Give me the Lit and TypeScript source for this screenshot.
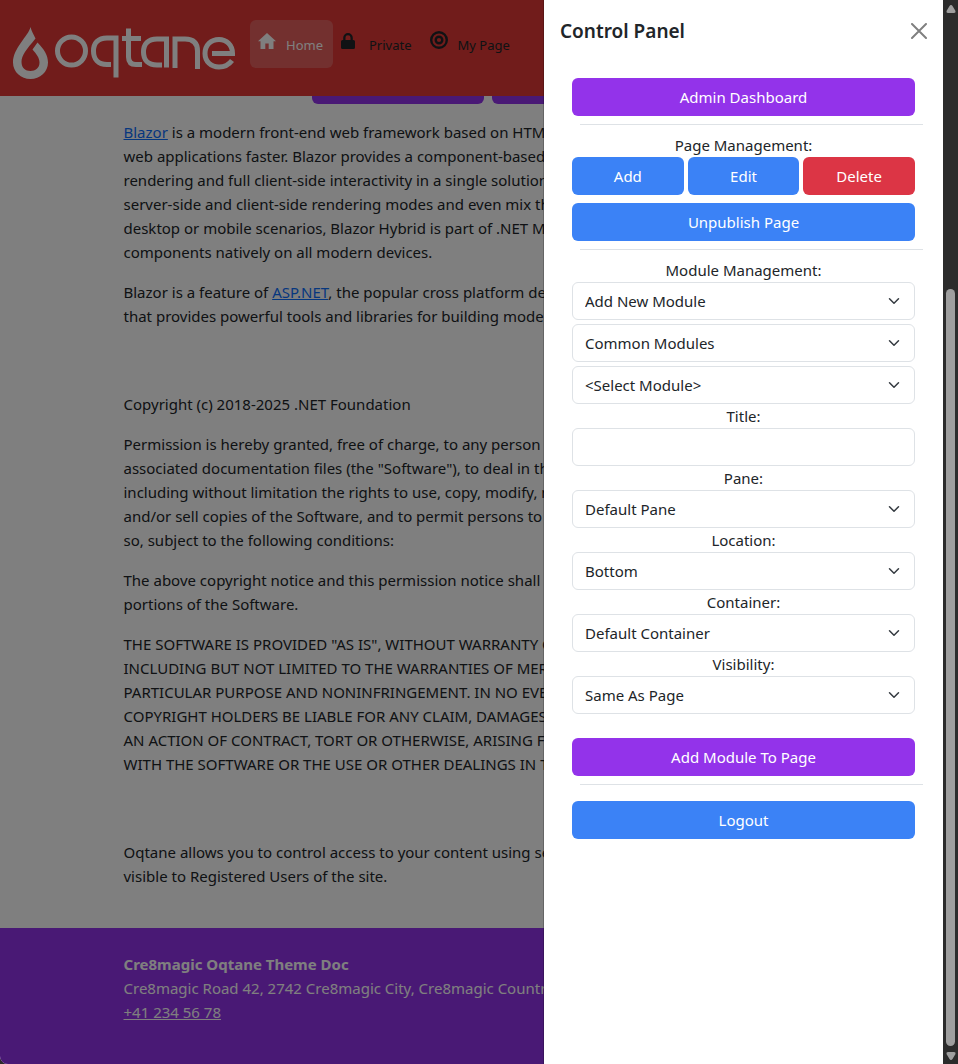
import { LitElement, html, css, svg } from "lit";
import { customElement } from "lit/decorators.js";

const INTRO = [
  html`<a href="#blazor">Blazor</a> is a modern front-end web framework based on HTML, CSS, and C# that helps you build`,
  "web applications faster. Blazor provides a component-based architecture with server-side",
  "rendering and full client-side interactivity in a single solution, where you can switch between",
  "server-side and client-side rendering modes and even mix them in the same page. For",
  "desktop or mobile scenarios, Blazor Hybrid is part of .NET MAUI and lets you render",
  "components natively on all modern devices.",
];
const FEATURE = [
  html`Blazor is a feature of <a href="#aspnet">ASP.NET</a>, the popular cross platform development framework`,
  "that provides powerful tools and libraries for building modern web applications.",
];
const LICENSE = [
  ["Copyright (c) 2018-2025 .NET Foundation"],
  [
    "Permission is hereby granted, free of charge, to any person obtaining a copy of this software and",
    "associated documentation files (the \"Software\"), to deal in the Software without restriction,",
    "including without limitation the rights to use, copy, modify, merge, publish, distribute, sublicense,",
    "and/or sell copies of the Software, and to permit persons to whom the Software is furnished to do",
    "so, subject to the following conditions:",
  ],
  [
    "The above copyright notice and this permission notice shall be included in all copies or substantial",
    "portions of the Software.",
  ],
  [
    "THE SOFTWARE IS PROVIDED \"AS IS\", WITHOUT WARRANTY OF ANY KIND, EXPRESS OR IMPLIED,",
    "INCLUDING BUT NOT LIMITED TO THE WARRANTIES OF MERCHANTABILITY, FITNESS FOR A",
    "PARTICULAR PURPOSE AND NONINFRINGEMENT. IN NO EVENT SHALL THE AUTHORS OR",
    "COPYRIGHT HOLDERS BE LIABLE FOR ANY CLAIM, DAMAGES OR OTHER LIABILITY, WHETHER IN",
    "AN ACTION OF CONTRACT, TORT OR OTHERWISE, ARISING FROM, OUT OF OR IN CONNECTION",
    "WITH THE SOFTWARE OR THE USE OR OTHER DEALINGS IN THE SOFTWARE.",
  ],
];
const ACCESS = [
  "Oqtane allows you to control access to your content using security roles. This page is only",
  "visible to Registered Users of the site.",
];

const lines = (rows: unknown[]) => html`<p>${rows.map((r) => html`<span class="line">${r}</span>`)}</p>`;

const logo = svg`
  <svg class="logo" viewBox="0 0 224 54" role="img" aria-label="Oqtane">
    <path fill="#fff" d="M17.500 0C15.500 9 0 21 0 35.500C0 45 8 52 17.500 52C27 52 35 45 35 35.500C35 28.500 31 22 24.500 15.500L19.500 22.500C23.500 27 26.500 31 26.500 35.500C26.500 41 22.500 44 17.500 44C12.500 44 8.500 41 8.500 35C8.500 28 13.500 22.500 22.500 11.500C20.500 7.500 18.500 4 17.500 0Z"/>
    <g fill="none" stroke="#fff" stroke-width="5">
      <circle cx="58.500" cy="24" r="14"/>
      <path d="M103 50.500V11H94C85 11 80.500 16 80.500 24C80.500 32 85 37.500 94 37.500H98"/>
      <path d="M115.500 1.500V30C115.500 35 118 37.500 123 37.500H129M109 11.500H128"/>
      <path d="M153.500 40.500V12H144C135 12 130.500 17 130.500 25C130.500 33 135 38 144 38H149"/>
      <path d="M162 41V12H172C180 12 184.500 16 184.500 24V42"/>
      <path d="M199 26.500H219.500C219.500 18 213.500 12.500 206 12.500C198 12.500 192 18 192 26.500C192 34.500 198 40 206 40C211.500 40 216 37.500 219 33.500"/>
    </g>
  </svg>`;

const icons = {
  home: svg`<svg class="icon" viewBox="0 0 18 18"><path d="M9 1L0 9.200H2.500V17H7.300V11.500H10.700V17H15.500V9.200H18Z"/></svg>`,
  lock: svg`<svg class="icon" viewBox="0 0 18 18"><path fill-rule="evenodd" d="M2.200 8V5.800A4.800 4.800 0 0 1 11.800 5.800V8H12.500Q14 8 14 9.500V15.500Q14 17 12.500 17H1.500Q0 17 0 15.500V9.500Q0 8 1.500 8ZM4.500 8H9.500V5.800A2.500 2.500 0 0 0 4.500 5.800Z"/></svg>`,
  target: svg`<svg class="icon" viewBox="0 0 18 18"><g fill="none" stroke="currentColor" stroke-width="2.400"><circle cx="9" cy="8" r="7.800"/><circle cx="9" cy="8" r="3.300"/></g></svg>`,
};

@customElement("control-panel")
export class ControlPanel extends LitElement {
  static styles = css`
    :host { display: block; box-sizing: border-box; background: #fff; color: #212529; border-left: 1px solid rgba(0, 0, 0, 0.2);
      font: 15px/24px "Noto Sans", "Open Sans", sans-serif; background-clip: padding-box; }
    * { box-sizing: border-box; }
    .head { display: flex; align-items: center; justify-content: space-between; padding: 16px; height: 62px; }
    h5 { margin: 0; font-size: 19px; line-height: 30px; font-weight: 600; color: #212529; }
    .close { display: flex; border: 0; background: none; padding: 0; color: #808080; }
    .close svg { width: 16px; height: 16px; }
    .body { display: flex; flex-direction: column; padding: 16px 28px; }
    .btn { height: 38px; border: 0; border-radius: 6px; padding: 0 12px; font: inherit; color: #fff; background: #3b82f6; }
    .primary { background: #9333ea; }
    .danger { background: #dc3545; }
    hr { width: 100%; height: 1px; margin: 8px 0; border: 0; background: #dee2e6; position: relative; left: 8px; }
    .trio { display: grid; grid-template-columns: repeat(3, 1fr); gap: 4px; margin-bottom: 8px; }
    .label { display: block; text-align: center; line-height: 24px; }
    .stack { display: grid; gap: 4px; }
    .field { display: block; width: 100%; height: 38px; border: 1px solid #dee2e6; border-radius: 6px; background: #fff;
      color: #212529; font: inherit; padding: 0 36px 0 12px; appearance: none; }
    .pick { display: grid; align-items: center; }
    .pick > * { grid-area: 1 / 1; }
    .pick svg { justify-self: end; width: 12px; height: 12px; margin-right: 15px; pointer-events: none; }
    .submit { margin-top: 24px; }
    .logout { margin-top: 8px; }
  `;

  private pick(id: string, value: string, name = "") {
    return html`<div class="pick">
      <select class="field" id=${id} aria-label=${name || value}><option>${value}</option></select>
      <svg viewBox="0 0 16 16" fill="none" stroke="#343a40" stroke-width="2" stroke-linecap="round" stroke-linejoin="round"><path d="m2 5 6 6 6-6" /></svg>
    </div>`;
  }

  private row(id: string, label: string, value: string) {
    return html`<label class="label" for=${id}>${label}:</label>${this.pick(id, value, label)}`;
  }

  render() {
    return html`
      <div class="head">
        <h5>Control Panel</h5>
        <button class="close" aria-label="Close">
          <svg viewBox="0 0 16 16" stroke="currentColor" stroke-width="2" stroke-linecap="round"><path d="M1 1L15 15M15 1L1 15" /></svg>
        </button>
      </div>
      <div class="body">
        <button class="btn primary">Admin Dashboard</button>
        <hr />
        <span class="label">Page Management:</span>
        <div class="trio">
          <button class="btn">Add</button>
          <button class="btn">Edit</button>
          <button class="btn danger">Delete</button>
        </div>
        <button class="btn">Unpublish Page</button>
        <hr />
        <label class="label" for="mode">Module Management:</label>
        <div class="stack">
          ${this.pick("mode", "Add New Module")} ${this.pick("category", "Common Modules")} ${this.pick("module", "<Select Module>")}
        </div>
        <label class="label" for="title">Title:</label>
        <input class="field" id="title" type="text" />
        ${this.row("pane", "Pane", "Default Pane")} ${this.row("location", "Location", "Bottom")}
        ${this.row("container", "Container", "Default Container")} ${this.row("visibility", "Visibility", "Same As Page")}
        <button class="btn primary submit">Add Module To Page</button>
        <hr />
        <button class="btn logout">Logout</button>
      </div>
    `;
  }
}

@customElement("app-root")
export class AppRoot extends LitElement {
  static styles = css`
    :host { display: flex; position: relative; min-height: 100vh; background: #2c2c2c; overflow: hidden;
      font: 15px/24px "Noto Sans", "Open Sans", sans-serif; color: #212529; }
    * { box-sizing: border-box; }
    .page { flex: 1; min-width: 0; display: flex; flex-direction: column; position: relative; overflow: hidden; background: #fff;
      border-bottom-left-radius: 8px; }
    header { display: flex; align-items: flex-start; height: 96px; padding: 20px 13px; background: #e23936; position: relative; z-index: 1; }
    .logo { width: 224px; height: 54px; margin: 7px 13px 0 0; }
    nav { display: flex; font-size: 13px; }
    nav a { display: flex; align-items: flex-start; gap: 10px; height: 48px; padding: 12px 10px 12px 8px; border-radius: 6px; color: #212529; text-decoration: none; }
    nav a.on { background: rgba(255, 255, 255, 0.2); color: #fff; }
    nav span { line-height: 26px; }
    .icon { width: 18px; height: 18px; fill: currentColor; overflow: visible; }
    main { flex: 1; width: 100%; max-width: 720px; margin: -30px auto 0; padding: 0 12px; }
    .cta { display: flex; justify-content: center; gap: 8px; margin-bottom: 16px; }
    .cta button { height: 38px; min-width: 139px; border: 0; border-radius: 6px; background: #9333ea; color: #fff; font: inherit; }
    .cta .wide { min-width: 172px; }
    p { margin: 0 0 16px; }
    .line { display: block; white-space: nowrap; }
    main a { color: #0d6efd; }
    section { margin-bottom: 64px; }
    section p:last-child { margin-bottom: 0; }
    section:last-child { margin-bottom: 40px; }
    footer { background: #9333ea; color: #fff; padding: 24px 12px 40px; }
    address { max-width: 696px; margin: 0 auto; font-style: normal; white-space: nowrap; }
    address > * { display: block; }
    address a { color: inherit; }
    .backdrop { position: absolute; inset: 0; background: rgba(0, 0, 0, 0.5); z-index: 2; }
    control-panel { position: absolute; top: 0; right: 0; bottom: 0; width: 400px; z-index: 3; }
    .scroll { width: 15px; display: flex; flex-direction: column; align-items: center; justify-content: space-between; padding: 5px 0 4px; }
    .scroll svg { width: 10px; height: 8px; fill: #9f9f9f; }
    .track { flex: 1; display: flex; flex-direction: column; margin: 4px 0 6px; }
    .before { flex: 272; }
    .thumb { flex: 757; width: 9px; border-radius: 5px; background: #9f9f9f; }
  `;

  render() {
    return html`
      <div class="page">
        <header>
          ${logo}
          <nav>
            <a class="on" href="#home">${icons.home}<span>Home</span></a>
            <a href="#private">${icons.lock}<span>Private</span></a>
            <a href="#mypage">${icons.target}<span>My Page</span></a>
          </nav>
        </header>
        <main>
          <div class="cta"><button class="wide">Get Started</button><button>Learn More</button></div>
          <section>${lines(INTRO)}${lines(FEATURE)}</section>
          <section>${LICENSE.map(lines)}</section>
          <section>${lines(ACCESS)}</section>
        </main>
        <footer>
          <address>
            <strong>Cre8magic Oqtane Theme Doc</strong>
            <span>Cre8magic Road 42, 2742 Cre8magic City, Cre8magic Country</span>
            <a href="tel:+412345678">+41 234 56 78</a>
          </address>
        </footer>
        <div class="backdrop"></div>
        <control-panel></control-panel>
      </div>
      <div class="scroll" aria-hidden="true">
        <svg viewBox="0 0 10 8"><path d="M5 0Q6 0 6.500 1L9.500 6Q10 8 8 8H2Q0 8 .5 6L3.500 1Q4 0 5 0Z" /></svg>
        <div class="track"><div class="before"></div><div class="thumb"></div></div>
        <svg viewBox="0 0 10 8"><path d="M5 8Q6 8 6.500 7L9.500 2Q10 0 8 0H2Q0 0 .5 2L3.500 7Q4 8 5 8Z" /></svg>
      </div>
    `;
  }
}
